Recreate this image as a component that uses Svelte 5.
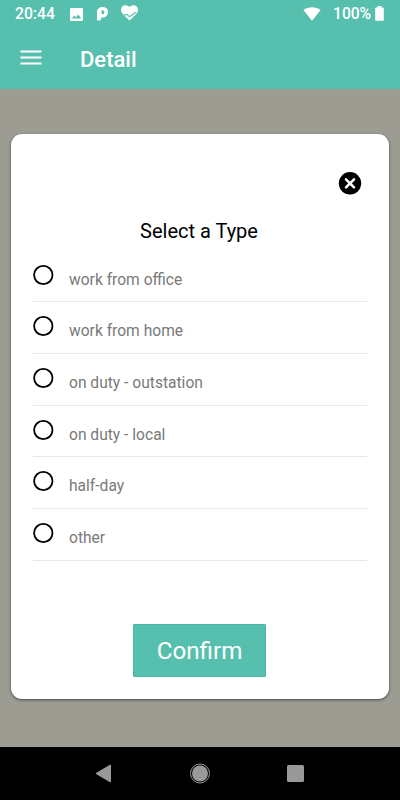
<script>
  const options = [
    'work from office',
    'work from home',
    'on duty - outstation',
    'on duty - local',
    'half-day',
    'other'
  ];
  let selected = $state('');
</script>

<div class="screen">
  <header>
    <div class="status">
      <span class="time">20:44</span>
      <svg class="photo" width="13" height="13" viewBox="0 0 13 13">
        <path fill="#fff" fill-rule="evenodd" d="M1.2 0h10.6Q13 0 13 1.2v10.6Q13 13 11.800 13H1.200Q0 13 0 11.800V1.200Q0 0 1.200 0ZM1.800 10.400h9.400L8.300 6.400 5.900 9.300 4.300 7.400Z" />
      </svg>
      <svg class="pin" width="11" height="14" viewBox="0 0 11 14">
        <path fill="#fff" fill-rule="evenodd" d="M0 5.300C0 2 2.300 0 5.600 0 8.800 0 11 1.900 11 5c0 3.300-2.400 5.600-5.500 5.600-.4 0-.8 0-1.200-.2V12L3 13.600H.4L0 13ZM4.500 3.500v3.500c1.900.5 2.900-.4 2.900-1.800 0-1.400-1.200-2.200-2.900-1.700Z" />
      </svg>
      <svg class="heart" width="17" height="16" viewBox="0 0 17 16">
        <path fill="#fff" d="M8.500 15.500 2 9.200C.6 7.800 0 6.500 0 4.800 0 2.200 2 .2 4.600.2c1.500 0 3 .7 3.900 1.900C9.400.9 10.900.2 12.400.2 15 .2 17 2.200 17 4.800c0 1.700-.6 3-2 4.400Z" />
        <path fill="none" stroke="#57bfae" stroke-width="1.100" d="M2.600 10.200 6 9.400 8.500 11.800 14.800 7.200" />
      </svg>
      <span class="space"></span>
      <svg class="wifi" width="18" height="14" viewBox="0 0 18 14">
        <path fill="#fff" d="M.4 3C5.400-.8 12.600-.8 17.600 3L9 13.800Z" />
      </svg>
      <span class="percent">100%</span>
      <svg class="battery" width="9" height="15" viewBox="0 0 9 15">
        <path fill="#fff" d="M2.600 0h3.800v1.500H8q.8 0 .8.800v11.700q0 .8-.8.800H1q-.8 0-.8-.8V2.300q0-.8.800-.8h1.600Z" />
      </svg>
    </div>
    <div class="toolbar">
      <svg width="22" height="16" viewBox="0 0 22 16">
        <path stroke="#fff" stroke-width="2" d="M.5 1.500h21M.5 7.500h21M.5 13.500h21" />
      </svg>
      <h1>Detail</h1>
    </div>
  </header>

  <main>
    <section class="dialog">
      <button class="close" aria-label="Close">
        <svg width="24" height="24" viewBox="0 0 24 24">
          <circle cx="12" cy="12.300" r="11.200" />
          <path stroke="#fff" stroke-width="2.500" stroke-linecap="round" d="m8 8.300 8 8M16 8.300l-8 8" />
        </svg>
      </button>
      <h2>Select a Type</h2>
      <ul>
        {#each options as option}
          <li>
            <button class="option" onclick={() => (selected = option)}>
              <svg width="22" height="22" viewBox="0 0 22 22">
                <circle cx="11.300" cy="11" r="9.200" fill="none" stroke="#000" stroke-width="1.800" />
                {#if selected === option}<circle cx="11.300" cy="11" r="5" />{/if}
              </svg>
              <span>{option}</span>
            </button>
          </li>
        {/each}
      </ul>
      <button class="confirm">Confirm</button>
    </section>
  </main>

  <nav>
    <svg width="17" height="20" viewBox="0 0 17 20">
      <path fill="#999" stroke="#999" stroke-linejoin="round" d="M1 9.500 15.500 1v17Z" />
    </svg>
    <svg width="22" height="22" viewBox="0 0 22 22">
      <circle cx="11" cy="10.500" r="9.500" fill="none" stroke="#999" />
      <circle cx="11" cy="10.500" r="8" fill="#999" />
    </svg>
    <svg width="17" height="17" viewBox="0 0 17 17">
      <rect width="17" height="17" rx="1.500" fill="#999" />
    </svg>
  </nav>
</div>

<style>
  :global(body) { margin: 0; }
  .screen {
    width: 400px;
    height: 800px;
    display: flex;
    flex-direction: column;
    overflow: hidden;
    background: #9c9c93;
    font-family: Roboto, sans-serif;
  }
  svg { display: block; flex: none; }
  button { border: 0; padding: 0; background: none; font: inherit; cursor: pointer; }
  header { height: 89px; flex: none; background: #57bfae; color: #fff; }
  .status {
    height: 28px;
    display: flex;
    align-items: center;
    padding: 0 16px 0 15px;
    font-size: 15.700px;
    line-height: 28px;
    font-weight: 500;
    box-sizing: border-box;
  }
  .time { width: 55px; }
  .heart { margin: -2px 0 0 13px; }
  .pin { margin-left: 14px; }
  .space { flex: 1; }
  .wifi { margin-top: -1px; }
  .battery { margin-top: -1px; }
  .percent { margin: 0 4px 0 12px; letter-spacing: -.1px; }
  .toolbar { height: 61px; display: flex; align-items: center; padding-left: 20px; }
  .toolbar svg { margin-top: -1px; }
  h1 { margin: 2px 0 0 38px; font-size: 22px; line-height: 26px; font-weight: 500; }
  main { flex: 1; padding: 45.400px 11px 0; }
  .dialog {
    height: 564.800px;
    display: flex;
    flex-direction: column;
    border-radius: 11px;
    background: #fff;
    box-shadow: 0 1px 3px rgba(0, 0, 0, .55);
  }
  .close { align-self: flex-end; margin: 36.600px 27px 0 0; width: 24px; height: 24px; }
  h2 {
    margin: 23.400px 0 0;
    padding-right: 2px;
    text-align: center;
    font-size: 20px;
    line-height: 26px;
    font-weight: 400;
    color: #000;
  }
  ul { margin: 6.300px 22px 0; padding: 0; list-style: none; }
  li { height: 51.700px; box-sizing: border-box; border-bottom: 1px solid #e8e8e8; }
  .option { width: 100%; height: 100%; display: flex; align-items: flex-start; text-align: left; }
  .option svg { margin: 13px 0 0 -1px; }
  .option span { margin: 19px 0 0 15px; font-size: 15.600px; line-height: 20px; color: #7a7a7a; }
  .confirm {
    align-self: center;
    width: 133px;
    height: 53px;
    margin: 63px 1px 0 0;
    border-radius: 2px;
    background: #57bfae;
    box-shadow: inset 0 0 0 1px #45b9a5;
    color: #fff;
    font-size: 24.200px;
    line-height: 54px;
  }
  nav {
    height: 53px;
    flex: none;
    display: flex;
    justify-content: space-between;
    align-items: center;
    padding: 0 96px 0 95px;
    background: #000;
  }
</style>
